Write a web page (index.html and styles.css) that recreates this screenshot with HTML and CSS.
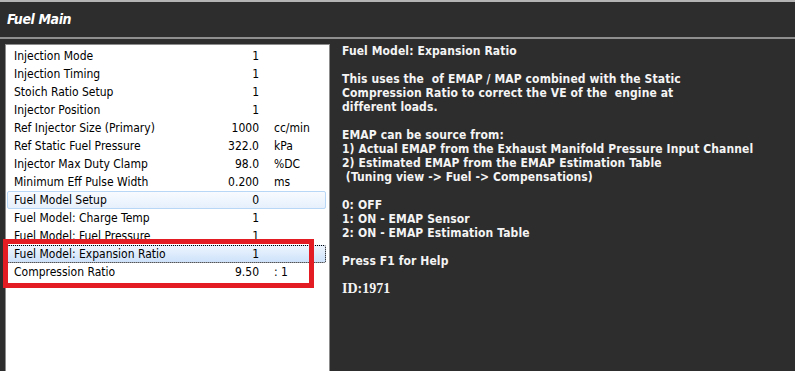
FILE: index.html
```html
<!DOCTYPE html>
<html lang="en">

<head>
    <meta charset="UTF-8">
    <meta name="viewport" content="width=device-width, initial-scale=1.0">
    <title>Fuel Main</title>
    <link rel="stylesheet" href="styles.css">
</head>

<body>
    <div class="window">
        <div class="title-bar">Fuel Main</div>
        <div class="content">
            <div class="list">
                <div class="row"><span>Injection Mode</span><span class="val">1</span><span class="unit"></span></div>
                <div class="row"><span>Injection Timing</span><span class="val">1</span><span class="unit"></span></div>
                <div class="row"><span>Stoich Ratio Setup</span><span class="val">1</span><span class="unit"></span></div>
                <div class="row"><span>Injector Position</span><span class="val">1</span><span class="unit"></span></div>
                <div class="row"><span>Ref Injector Size (Primary)</span><span class="val">1000</span><span class="unit">cc/min</span></div>
                <div class="row"><span>Ref Static Fuel Pressure</span><span class="val">322.0</span><span class="unit">kPa</span></div>
                <div class="row"><span>Injector Max Duty Clamp</span><span class="val">98.0</span><span class="unit">%DC</span></div>
                <div class="row"><span>Minimum Eff Pulse Width</span><span class="val">0.200</span><span class="unit">ms</span></div>
                <div class="row hover"><span>Fuel Model Setup</span><span class="val">0</span><span class="unit"></span></div>
                <div class="row"><span>Fuel Model: Charge Temp</span><span class="val">1</span><span class="unit"></span></div>
                <div class="row"><span>Fuel Model: Fuel Pressure</span><span class="val">1</span><span class="unit"></span></div>
                <div class="row selected"><span>Fuel Model: Expansion Ratio</span><span class="val">1</span><span class="unit"></span></div>
                <div class="row"><span>Compression Ratio</span><span class="val">9.50</span><span class="unit">: 1</span></div>
                <div class="callout"></div>
            </div>
            <div class="help">
                <p>Fuel Model: Expansion Ratio</p>
                <p>This uses the&nbsp; of EMAP / MAP combined with the Static<br>Compression Ratio to correct the VE of the&nbsp; engine at<br>different loads.</p>
                <p>EMAP can be source from:<br>1) Actual EMAP from the Exhaust Manifold Pressure Input Channel<br>2) Estimated EMAP from the EMAP Estimation Table<br>&nbsp;(Tuning view -&gt; Fuel -&gt; Compensations)</p>
                <p>0: OFF<br>1: ON - EMAP Sensor<br>2: ON - EMAP Estimation Table</p>
                <p>Press F1 for Help</p>
                <p class="id">ID:1971</p>
            </div>
        </div>
    </div>
</body>

</html>
```

FILE: styles.css
```css
body {
    margin: 0;
    background-color: #2d2d2d;
    overflow: hidden;
}

.window {
    height: 371px;
    border-top: 2px solid #b4b4b4;
    box-sizing: border-box;
    display: flex;
    flex-direction: column;
}

.title-bar {
    height: 35px;
    line-height: 35px;
    padding-left: 7px;
    color: #ffffff;
    font-family: "DejaVu Sans Condensed", "DejaVu Sans", sans-serif;
    font-size: 14px;
    letter-spacing: -0.4px;
    font-weight: bold;
    font-style: italic;
    border-bottom: 2px solid #8e8e8e;
}

.content {
    flex: 1;
    display: flex;
    padding-top: 5px;
    min-height: 0;
}

.list {
    position: relative;
    width: 323px;
    margin-left: 5px;
    padding-top: 2px;
    background-color: #ffffff;
    border: 1px solid #8c8c8c;
    border-bottom: none;
    font-family: "DejaVu Sans Condensed", "DejaVu Sans", sans-serif;
    font-size: 12px;
    color: #000000;
}

.row {
    display: grid;
    grid-template-columns: 175px 70px auto;
    height: 18px;
    margin-left: 1px;
    padding-left: 6px;
    box-sizing: border-box;
    width: 319px;
    border: 1px solid transparent;
    border-radius: 2px;
}

.row span {
    line-height: 16px;
    white-space: nowrap;
}

.val {
    text-align: right;
}

.unit {
    padding-left: 15px;
}

.row.hover {
    border-color: #b8d6f6;
    background: linear-gradient(#f8fbff, #e6f0fc);
}

.row.selected {
    border: 1px dotted #000000;
    background: linear-gradient(#eef5fe, #cde2fa);
}

.callout {
    position: absolute;
    left: -3px;
    top: 194px;
    width: 301px;
    height: 39px;
    border: 5px solid #e31b23;
}

.help {
    flex: 1;
    padding-left: 12px;
    color: #f4f4f4;
    font-family: "DejaVu Sans Condensed", "DejaVu Sans", sans-serif;
    font-size: 12px;
    letter-spacing: 0.1px;
    font-weight: bold;
    line-height: 14px;
}

.help p {
    margin: 0 0 14px 0;
}

.help .id {
    font-family: "Liberation Serif", serif;
    font-size: 14px;
    letter-spacing: 0;
}
```
